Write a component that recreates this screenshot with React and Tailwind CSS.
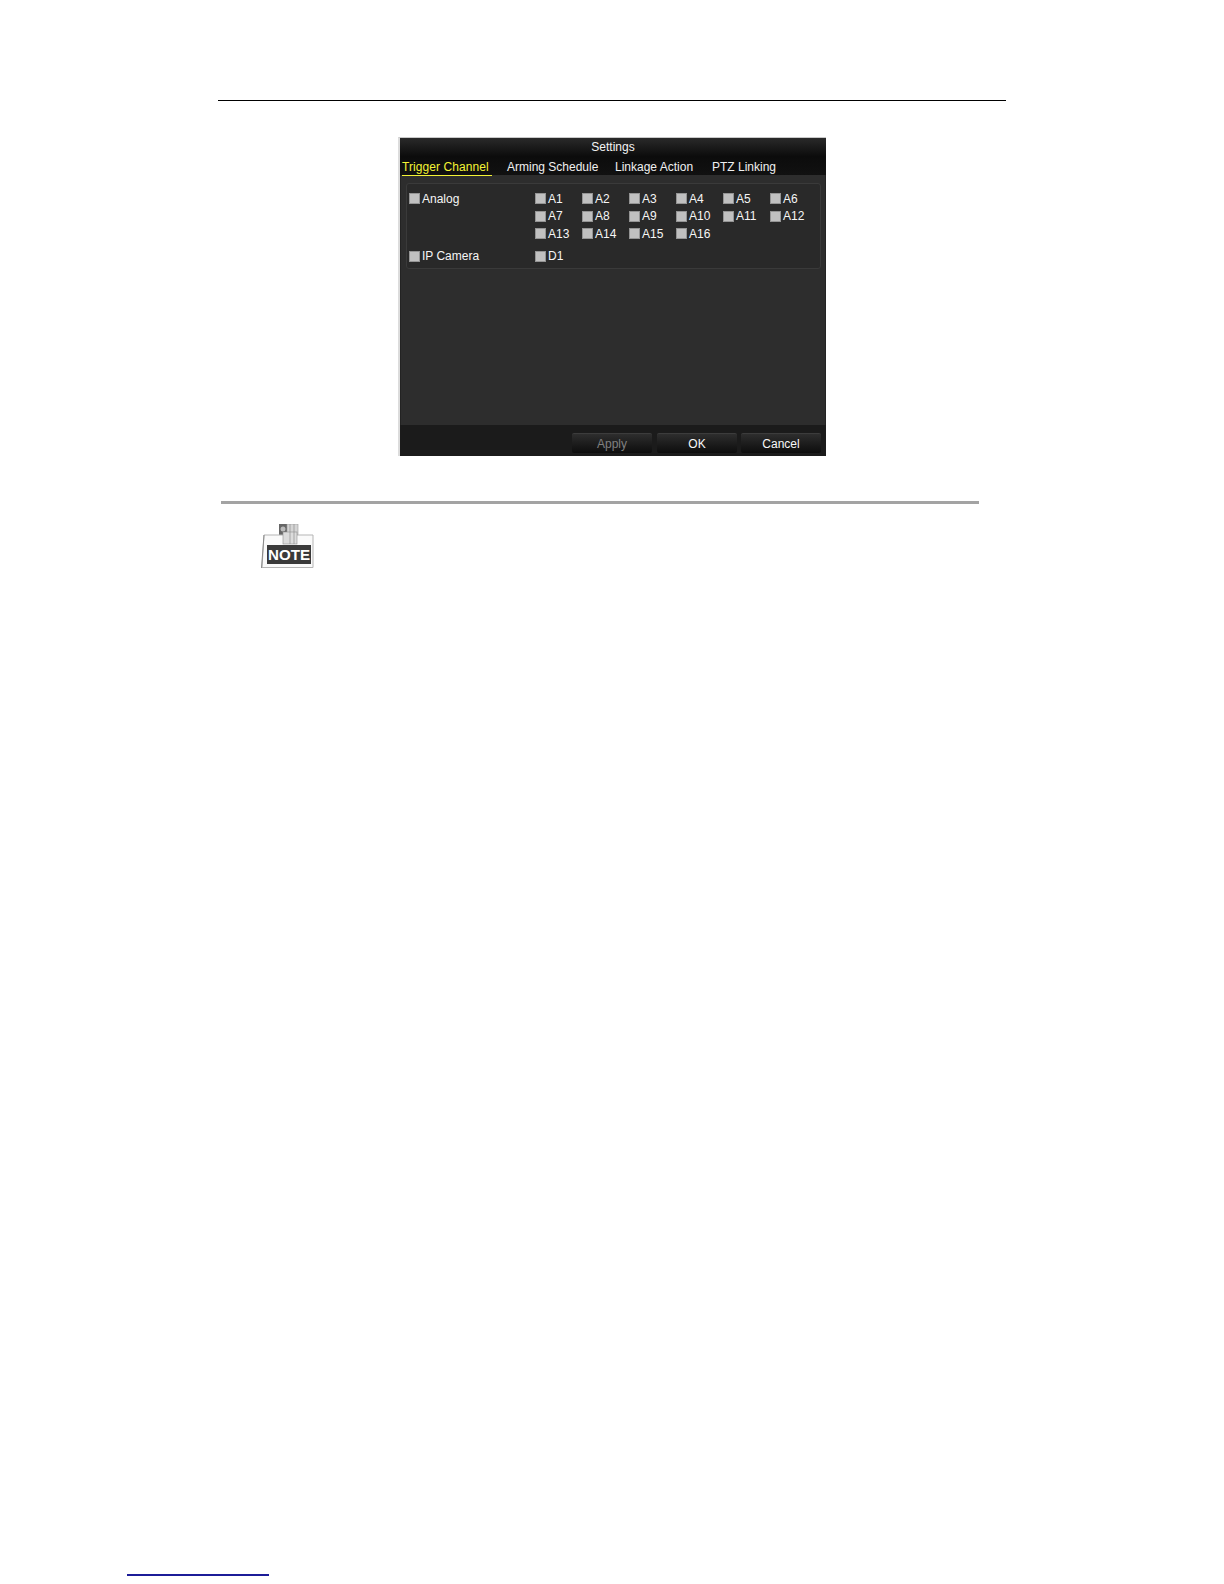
import React from 'react';

const font = { fontFamily: '"Liberation Sans", Arial, sans-serif' };

const tabs = [
    { label: 'Arming Schedule', width: 'w-[108px]' },
    { label: 'Linkage Action', width: 'w-[97px]' },
    { label: 'PTZ Linking', width: 'w-[80px]' },
];

const channels = [
    'A1', 'A2', 'A3', 'A4', 'A5', 'A6',
    'A7', 'A8', 'A9', 'A10', 'A11', 'A12',
    'A13', 'A14', 'A15', 'A16',
];

const Check = ({ label }) => (
    <div className="flex items-center h-[17.5px] gap-[2px]">
        <span className="w-[11px] h-[11px] bg-[#c0c0c0] border border-[#949494] shrink-0"></span>
        <span className="text-[12px] leading-none text-[#f6f6f6]">{label}</span>
    </div>
);

const Button = ({ label, disabled, width }) => (
    <div className={`${width} h-[20px] flex items-center justify-center text-[12px] rounded-[2px] border-t border-[#3c3c3c] bg-gradient-to-b from-[#2e2e2e] to-[#0d0d0d] ${disabled ? 'text-[#808080]' : 'text-[#f8f8f8]'}`}>
        {label}
    </div>
);

const NoteIcon = () => (
    <svg width="54" height="45" viewBox="0 0 54 45" className="block">
        {/* clip and spring */}
        <rect x="18" y="0" width="8" height="11" fill="#666" />
        <circle cx="22" cy="5" r="2.5" fill="#bbb" />
        <rect x="26" y="0" width="11" height="11" fill="#d5d5d5" stroke="#999" strokeWidth="0.6" />
        {/* tag */}
        <path d="M3 11H52V43.5H1Z" fill="#fafafa" stroke="#b5b5b5" strokeWidth="1" />
        <path d="M3 11L0.5 44" stroke="#8a8a8a" strokeWidth="1" fill="none" />
        <rect x="22" y="8" width="14" height="12" fill="#dcdcdc" stroke="#8f8f8f" strokeWidth="0.6" />
        <path d="M29 0V20 M33 0V20" stroke="#8f8f8f" strokeWidth="0.7" />
        <rect x="6" y="21" width="44" height="19" fill="#3a3a3a" />
        <text x="28" y="36" textAnchor="middle" fontSize="15" fontWeight="700" fill="#fff" textLength="42" lengthAdjust="spacingAndGlyphs" fontFamily="Liberation Sans, Arial, sans-serif">NOTE</text>
    </svg>
);

const App = () => {
    return (
        <div className="w-[1224px] h-[1584px] bg-white flex flex-col relative overflow-hidden" style={font}>
            {/* Page header rule */}
            <div className="mt-[100px] ml-[218px] w-[788px] h-px bg-black"></div>

            {/* Settings dialog */}
            <div className="mt-[36px] ml-[398px] w-[428px] h-[319px] flex flex-col border-t border-[#c9c9c9] border-l-2 border-l-[#dcdcdc] bg-[#2d2d2d]">
                <div className="h-[37px] shrink-0 bg-gradient-to-b from-[#2a2a2a] via-[#0c0c0c] to-[#111111]">
                    <div className="h-[19px] flex items-center justify-center text-[12px] text-[#f4f4f4] -translate-y-px">Settings</div>
                    <div className="flex pl-[2px] items-start mt-[2px]">
                        <div className="w-[105px] shrink-0">
                            <div className="w-[90px] h-[17px] text-[12px] leading-[17px] text-[#f4f435] border-b border-[#f4f435] tracking-[0.08px]">Trigger Channel</div>
                        </div>
                        {tabs.map((tab) => (
                            <div key={tab.label} className={`${tab.width} shrink-0 text-[12px] leading-[17px] text-[#f0f0f0]`}>{tab.label}</div>
                        ))}
                    </div>
                </div>

                <div className="flex-1 flex flex-col pt-[8px] px-[2px] border-l border-r border-[#232323]">
                    <div className="h-[86px] ml-[3px] mr-[2px] rounded-[3px] border border-[#3a3a3a] bg-[#292929] pl-[2px] pt-[6px]">
                        <div className="flex">
                            <div className="w-[126px]"><Check label="Analog" /></div>
                            <div className="grid grid-cols-[repeat(6,47px)]">
                                {channels.map((c) => <Check key={c} label={c} />)}
                            </div>
                        </div>
                        <div className="flex mt-[5px]">
                            <div className="w-[126px]"><Check label="IP Camera" /></div>
                            <Check label="D1" />
                        </div>
                    </div>
                </div>

                {/* Footer buttons */}
                <div className="h-[31px] shrink-0 bg-[#1b1b1b] flex justify-end pr-[5px] pt-[8px]">
                    <Button label="Apply" disabled width="w-[80px]" />
                    <div className="ml-[5px] mr-[4px]"><Button label="OK" width="w-[80px]" /></div>
                    <Button label="Cancel" width="w-[80px]" />
                </div>
            </div>

            {/* Note block */}
            <div className="mt-[45px] ml-[221px] w-[758px] h-[3px] bg-[#a3a3a3]"></div>
            <div className="mt-[20px] ml-[261px]"><NoteIcon /></div>

            {/* Footnote link rule */}
            <div className="mt-auto mb-[8px] ml-[127px] w-[142px] h-[2px] bg-[#1c1c98]"></div>
        </div>
    );
};

export default App;
